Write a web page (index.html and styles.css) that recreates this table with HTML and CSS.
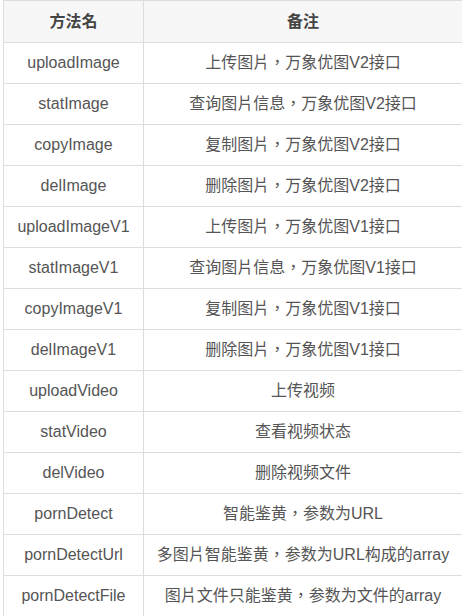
FILE: index.html
```html
<!DOCTYPE html>
<html>
<head>
    <meta charset="UTF-8">
    <title>方法列表</title>
    <link rel="stylesheet" href="styles.css">
</head>
<body>
<table class="api-table">
    <thead>
    <tr>
        <th class="col-name">方法名</th>
        <th>备注</th>
    </tr>
    </thead>
    <tbody>
    <tr><td>uploadImage</td><td>上传图片，万象优图V2接口</td></tr>
    <tr><td>statImage</td><td>查询图片信息，万象优图V2接口</td></tr>
    <tr><td>copyImage</td><td>复制图片，万象优图V2接口</td></tr>
    <tr><td>delImage</td><td>删除图片，万象优图V2接口</td></tr>
    <tr><td>uploadImageV1</td><td>上传图片，万象优图V1接口</td></tr>
    <tr><td>statImageV1</td><td>查询图片信息，万象优图V1接口</td></tr>
    <tr><td>copyImageV1</td><td>复制图片，万象优图V1接口</td></tr>
    <tr><td>delImageV1</td><td>删除图片，万象优图V1接口</td></tr>
    <tr><td>uploadVideo</td><td>上传视频</td></tr>
    <tr><td>statVideo</td><td>查看视频状态</td></tr>
    <tr><td>delVideo</td><td>删除视频文件</td></tr>
    <tr><td>pornDetect</td><td>智能鉴黄，参数为URL</td></tr>
    <tr><td>pornDetectUrl</td><td>多图片智能鉴黄，参数为URL构成的array</td></tr>
    <tr><td>pornDetectFile</td><td>图片文件只能鉴黄，参数为文件的array</td></tr>
    </tbody>
</table>
</body>
</html>
```

FILE: styles.css
```css
body {
    margin: 0;
    padding: 0;
    background-color: #fff;
    font-family: "Liberation Sans", "Noto Sans CJK TC", sans-serif;
    font-size: 16px;
    color: #555;
    overflow: hidden;
}
.api-table {
    border-collapse: collapse;
    width: 460px;
    margin-left: 3px;
}
.api-table th,
.api-table td {
    border: 1px solid #ddd;
    padding: 0 6px;
    text-align: center;
    line-height: 20px;
}
.api-table th {
    height: 41px;
    background-color: #f7f7f7;
    color: #444;
    font-weight: bold;
}
.api-table td {
    height: 40px;
}
.col-name {
    width: 140px;
    box-sizing: border-box;
}
```
